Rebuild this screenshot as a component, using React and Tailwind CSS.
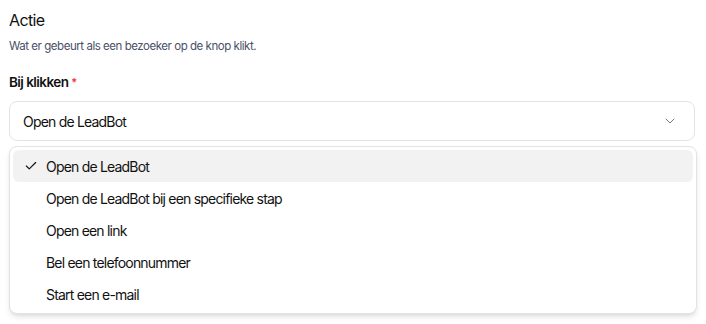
import { Check, ChevronDown } from 'lucide-react';

const options = [
  { value: 'open', label: 'Open de LeadBot' },
  { value: 'step', label: 'Open de LeadBot bij een specifieke stap' },
  { value: 'link', label: 'Open een link' },
  { value: 'call', label: 'Bel een telefoonnummer' },
  { value: 'mail', label: 'Start een e-mail' },
];

export default function App() {
  const value = 'open';

  return (
    <div className="w-[706px] h-[324px] bg-white px-[9px] pt-[9px] text-[#111] font-['Inter',sans-serif] tracking-[-0.05em]">
      <h2 className="text-[16px] leading-[22px] font-normal tracking-[-0.04em]">Actie</h2>
      <p className="mt-[7px] text-[11.5px] leading-[16px] text-[#4a5068] tracking-[-0.04em]">
        Wat er gebeurt als een bezoeker op de knop klikt.
      </p>

      <label className="mt-[18px] block text-[13.5px] leading-[20px] font-semibold tracking-[-0.04em]">
        Bij klikken <span className="text-red-500 text-[11px] align-top">*</span>
      </label>

      <div className="relative mt-[9px] w-[686px]">
        <button
          type="button"
          className="flex w-full h-[40px] items-center justify-between rounded-lg border border-[#e3e3e3] bg-white pl-[13px] pr-[16px] text-[14px]"
        >
          <span>Open de LeadBot</span>
          <ChevronDown className="w-4 h-4 text-[#777]" strokeWidth={1.5} />
        </button>

        <div className="mt-[5px] w-[688px] rounded-lg border border-[#e3e3e3] bg-white p-[3px] shadow-md">
          {options.map((opt) => (
            <div
              key={opt.value}
              className={`flex h-[32px] items-center rounded-md text-[14px] ${
                value === opt.value ? 'bg-[#f2f2f2]' : ''
              }`}
            >
              <span className="w-[33px] flex justify-center pl-[3px]">
                {value === opt.value && <Check className="w-[14px] h-[14px]" strokeWidth={2} />}
              </span>
              <span>{opt.label}</span>
            </div>
          ))}
        </div>
      </div>
    </div>
  );
}
